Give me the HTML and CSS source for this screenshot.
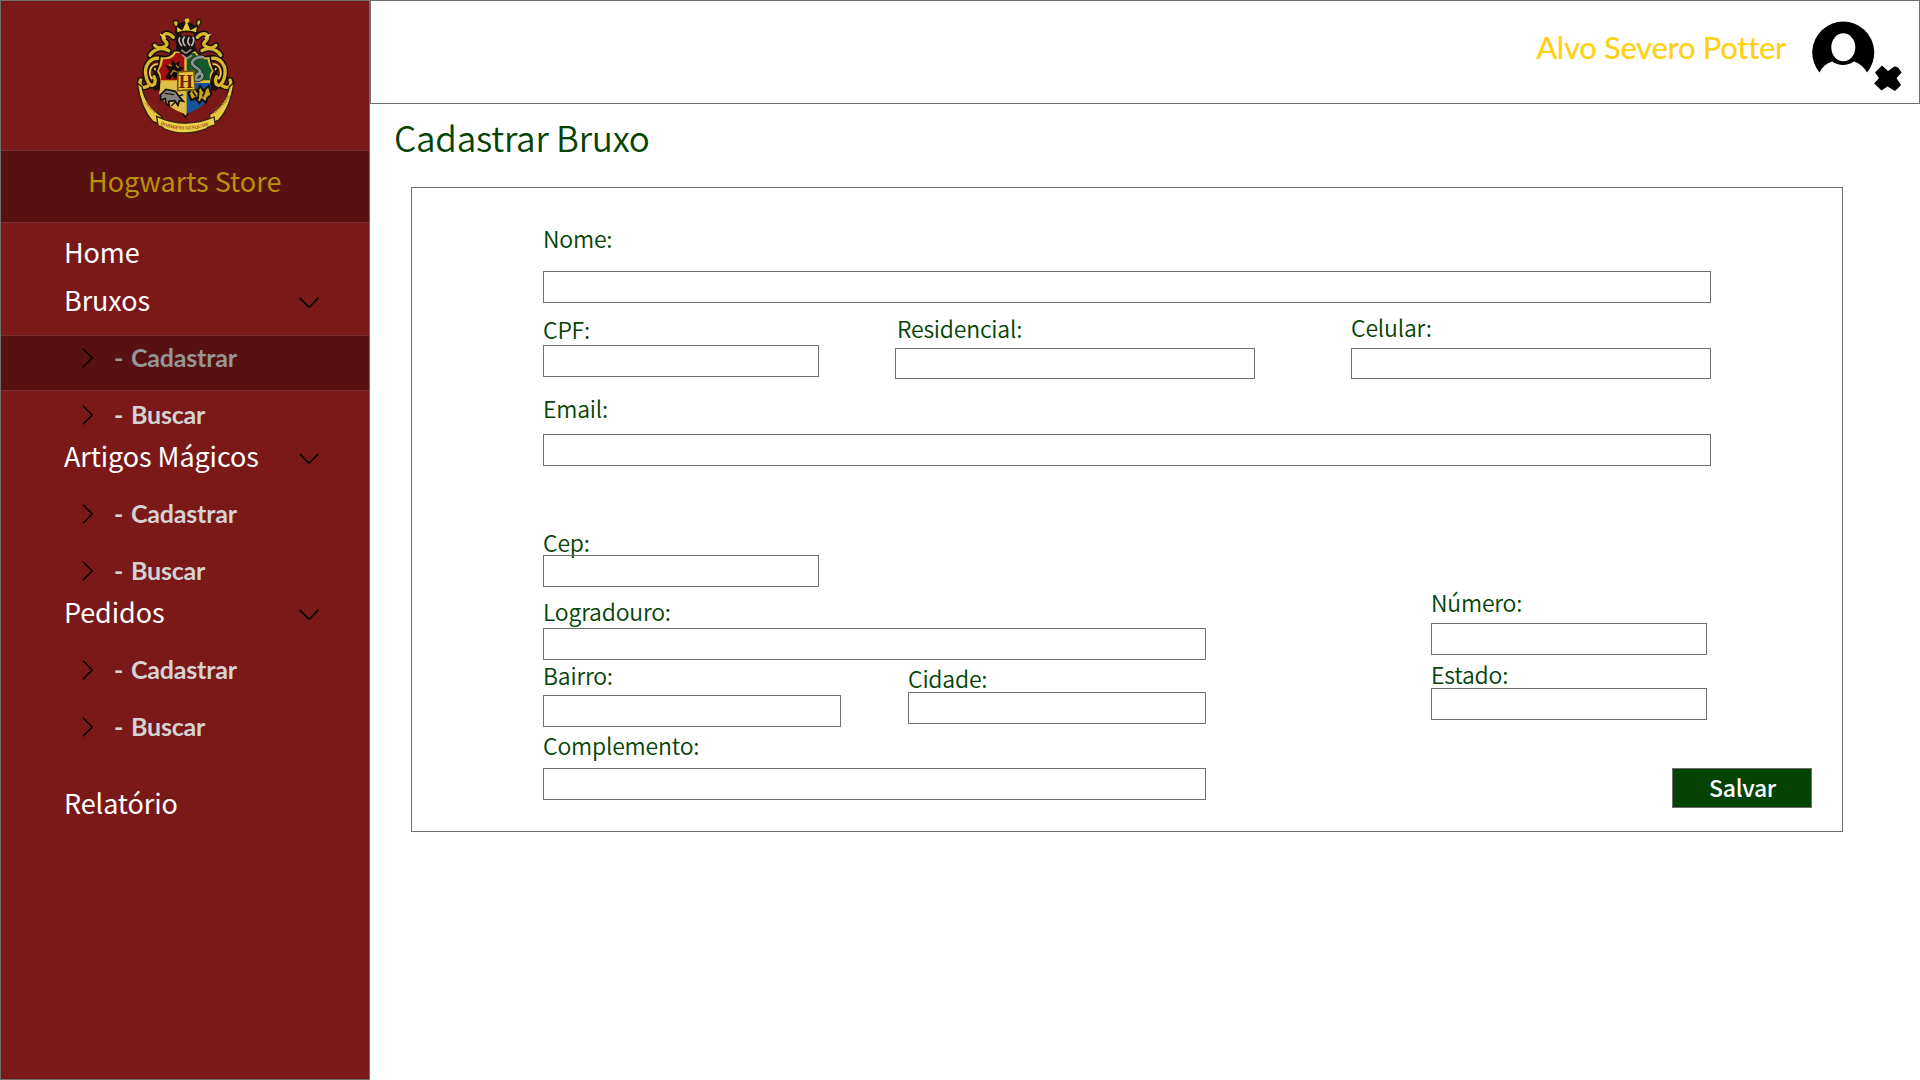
FILE: index.html
```html
<!DOCTYPE html>
<html lang="pt-BR">
<head>
<meta charset="utf-8">
<title>Hogwarts Store - Cadastrar Bruxo</title>
<link rel="stylesheet" href="styles.css">
</head>
<body>
<div class="app">
  <aside class="sidebar">
    <div class="logo">
      <svg class="crest" viewBox="0 0 390 450" aria-hidden="true">
        <!-- mantling -->
        <g fill="none" stroke="#16100a" stroke-width="19" stroke-linecap="round">
          <path d="M160 112c-22-24-42-2-24 12s-20 28-32 12M232 112c22-24 42-2 24 12s20 28 32 12M146 152c-26-16-50 2-56 14M246 152c26-16 50 2 56 14"/>
          <path d="M130 178c-40-14-62 22-50 58s34 16 22-6M262 178c40-14 62 22 50 58s-34 16-22-6M84 258c-22 12-28-6-22-18M308 258c22 12 28-6 22-18"/>
          <path d="M104 206l18 20M288 206l-18 20M108 262l8-16M284 262l-8-16"/>
        </g>
        <g fill="none" stroke="#d9b62c" stroke-width="10" stroke-linecap="round">
          <path d="M160 112c-22-24-42-2-24 12s-20 28-32 12M232 112c22-24 42-2 24 12s20 28 32 12M146 152c-26-16-50 2-56 14M246 152c26-16 50 2 56 14"/>
          <path d="M130 178c-40-14-62 22-50 58s34 16 22-6M262 178c40-14 62 22 50 58s-34 16-22-6M84 258c-22 12-28-6-22-18M308 258c22 12 28-6 22-18"/>
        </g>
        <g fill="none" stroke="#f1d552" stroke-width="5" stroke-linecap="round">
          <path d="M118 192c-30-2-34 30-22 44M274 192c30-2 34 30 22 44M104 206l18 20M288 206l-18 20M122 104l14 10M270 104l-14 10"/>
        </g>
        <!-- shield -->
        <path d="M120 168q28 8 42-16h66q14 24 42 16 4 30 14 46-16 22-10 56-18 42-62 58l-16 24-16-24q-44-16-62-58 6-34-10-56 10-16 12-46z" fill="#e0bd34" stroke="#17100a" stroke-width="5"/>
        <path d="M130 177q26 4 38-18h25v82h-71q4-18-6-28 10-14 14-36z" fill="#a30f10"/>
        <path d="M262 177q-26 4-38-18h-24v82h70q-4-18 6-28-10-14-14-36z" fill="#16592d"/>
        <path d="M121 249h72v92q-56-18-76-62 4-12 4-30z" fill="#dfc04a"/>
        <path d="M200 249h71q0 18 4 30-20 44-75 62z" fill="#16539c"/>
        <path d="M140 232l10-20-10-14 14 4 4-18 8 10 10-8-2 14 14 4-10 8 8 18-14-6-6 12-8-12-8 12z" fill="#130d0b" stroke="#130d0b" stroke-width="4"/>
        <path d="M146 194l10 4M152 224l8-12 10 4M168 196l8 8" stroke="#c49822" stroke-width="4"/>
        <path d="M252 172c-26-4-46 14-30 26s26 14 10 28 6 20 14 6-20-16-18 2" fill="none" stroke="#252d2a" stroke-width="13"/>
        <path d="M252 172c-26-4-46 14-30 26s26 14 10 28 6 20 14 6-20-16-18 2" fill="none" stroke="#899891" stroke-width="8"/>
        <path d="M122 284l16-16 28 6 12 16 12 14-12-2-4 14-10-14-18 2 2 14-10-8-2-14-14 4z" fill="#858580" stroke="#15120f" stroke-width="5"/>
        <path d="M176 288l14-4M168 304l-14 14M134 280l28 4" stroke="#18130e" stroke-width="4"/>
        <path d="M206 280l14-20 12 14 8-16 10 14 16-14 8 26-12 10-4 14-12-10-8 12-10-14-14 4z" fill="#caa428" stroke="#14100a" stroke-width="6"/>
        <path d="M218 274l10 16M236 272l-2 26M256 270l-8 20M220 296l14-4" stroke="#17120c" stroke-width="5"/>
        <path d="M174 216l48-3 3 56-52 3z" fill="#e8c433" stroke="#6f570f" stroke-width="5"/>
        <text x="197.500" y="263" text-anchor="middle" class="crest-letter">H</text>
        <!-- crown and helmet -->
        <path d="M165 94q4-28 28-28 28 0 38 20l-8 24 4 40-28 22-30-22z" fill="#17120f"/>
        <path d="M170 100l-2-24 18 12 14-32 12 32 22-12-4 24q-30-12-60 0z" fill="#edcb35" stroke="#1b150d" stroke-width="5"/>
        <circle cx="201" cy="62" r="7" fill="#e8c42c"/>
        <path d="M163 76q-8-12 5-16 12 6 4 18M238 76q10-10 0-18-13 4-6 18" fill="#dcb426" stroke="#221808" stroke-width="4"/>
        <path d="M180 112q-8 12 6 26M194 110q-12 14 2 28M208 112q-10 14 2 24M218 110q8 12-4 28" fill="none" stroke="#bdb9be" stroke-width="5"/>
        <path d="M184 100q16-6 36 0l2 10q-20-8-38 0z" fill="#881719"/>
        <path d="M184 150l14 10 16-12M186 164l14 12 16-10" fill="none" stroke="#99918d" stroke-width="5"/>
        <!-- motto ribbon -->
        <path d="M52 250l14 10q8 54 60 90l-8 22-20-8q-36-40-46-114zM342 248l-14 12q-10 54-60 84l6 26 22-10q34-34 46-112z" fill="#e8c842" stroke="#2b1b0b" stroke-width="4"/>
        <path d="M110 349q84 40 172 2l4 24q-20 4-28 12-66 24-124 0-8-8-20-10z" fill="#ecd04b" stroke="#38230e" stroke-width="4"/>
        <path id="motto-left" d="M75 309q18 24 38 37" fill="none"/>
        <path id="motto-mid" d="M121 374q74 30 150 0" fill="none"/>
        <path id="motto-right" d="M278 344q37-28 55-62" fill="none"/>
        <text class="motto"><textPath href="#motto-left" textLength="42" lengthAdjust="spacingAndGlyphs">DRACO</textPath></text>
        <text class="motto"><textPath href="#motto-mid" textLength="148" lengthAdjust="spacingAndGlyphs">DORMIENS NUNQUAM</textPath></text>
        <text class="motto"><textPath href="#motto-right" textLength="76" lengthAdjust="spacingAndGlyphs">TITILLANDUS</textPath></text>
      </svg>
    </div>
    <div class="store-name">Hogwarts Store</div>
    <nav class="nav">
      <a class="nav-item">Home</a>
      <div class="group">
        <a class="nav-item">Bruxos <svg class="down" viewBox="0 0 20 12"><path d="M.7.9 10 10.200 19.300.9"/></svg></a>
        <div class="submenu">
          <a class="sub-item active"><svg class="right" viewBox="0 0 12 20"><path d="M.9.7 10.200 10 .9 19.300"/></svg><span>- Cadastrar</span></a>
          <a class="sub-item"><svg class="right" viewBox="0 0 12 20"><path d="M.9.7 10.200 10 .9 19.300"/></svg><span>- Buscar</span></a>
        </div>
      </div>
      <div class="group">
        <a class="nav-item">Artigos Mágicos <svg class="down" viewBox="0 0 20 12"><path d="M.7.9 10 10.200 19.300.9"/></svg></a>
        <div class="submenu">
          <a class="sub-item"><svg class="right" viewBox="0 0 12 20"><path d="M.9.7 10.200 10 .9 19.300"/></svg><span>- Cadastrar</span></a>
          <a class="sub-item"><svg class="right" viewBox="0 0 12 20"><path d="M.9.7 10.200 10 .9 19.300"/></svg><span>- Buscar</span></a>
        </div>
      </div>
      <div class="group">
        <a class="nav-item">Pedidos <svg class="down" viewBox="0 0 20 12"><path d="M.7.9 10 10.200 19.300.9"/></svg></a>
        <div class="submenu">
          <a class="sub-item"><svg class="right" viewBox="0 0 12 20"><path d="M.9.7 10.200 10 .9 19.300"/></svg><span>- Cadastrar</span></a>
          <a class="sub-item"><svg class="right" viewBox="0 0 12 20"><path d="M.9.7 10.200 10 .9 19.300"/></svg><span>- Buscar</span></a>
        </div>
      </div>
      <a class="nav-item report">Relatório</a>
    </nav>
  </aside>
  <div class="content">
    <header class="topbar">
      <span class="user-name">Alvo Severo Potter</span>
      <svg class="user-icons" viewBox="0 0 92 74" aria-hidden="true">
        <path d="M7.500 51.500A31 31 0 1 1 55 51.500Q50.500 43.500 42 40.600Q37 44 31 44T20 40.600Q11.500 43.500 7.500 51.500z"/>
        <ellipse class="face" cx="31.300" cy="26.300" rx="12" ry="14"/>
        <path d="M70 44.500 76 50 82.500 45.500Q86 44.500 89.500 51.500L84.500 57.300 89 64 83 70 75.500 65.500 69.500 69.500 62.200 62.500 67 57 63 51.500z"/>
      </svg>
    </header>
    <main class="page">
      <h1 class="title">Cadastrar Bruxo</h1>
      <form class="panel">
        <div class="field nome"><label for="nome">Nome:</label><input id="nome"></div>
        <div class="row contact">
          <div class="field cpf"><label for="cpf">CPF:</label><input id="cpf"></div>
          <div class="field residencial"><label for="residencial">Residencial:</label><input id="residencial"></div>
          <div class="field celular"><label for="celular">Celular:</label><input id="celular"></div>
        </div>
        <div class="field email"><label for="email">Email:</label><input id="email"></div>
        <div class="field cep"><label for="cep">Cep:</label><input id="cep"></div>
        <div class="row address">
          <div class="street">
            <div class="field logradouro"><label for="logradouro">Logradouro:</label><input id="logradouro"></div>
            <div class="row district">
              <div class="field bairro"><label for="bairro">Bairro:</label><input id="bairro"></div>
              <div class="field cidade"><label for="cidade">Cidade:</label><input id="cidade"></div>
            </div>
            <div class="field complemento"><label for="complemento">Complemento:</label><input id="complemento"></div>
          </div>
          <div class="side">
            <div class="field numero"><label for="numero">Número:</label><input id="numero"></div>
            <div class="field estado"><label for="estado">Estado:</label><input id="estado"></div>
            <button class="save" type="button">Salvar</button>
          </div>
        </div>
      </form>
    </main>
  </div>
</div>
</body>
</html>
```
FILE: styles.css
```css
* { box-sizing: border-box; }
body {
  margin: 0;
  background: #fff;
  font-family: "Noto Sans CJK SC", "Noto Sans", sans-serif;
}
.app { display: flex; width: 1920px; height: 1080px; }

.sidebar {
  width: 370px;
  height: 1080px;
  background: #7b1818;
  border: 1px solid #707070;
}
.logo { display: flex; height: 149px; padding-left: 119px; }
.crest { width: 130px; height: 150px; margin-top: -1px; }
.crest-letter { font: bold 54px "Liberation Serif", serif; fill: #65200e; }
.motto { font: bold 15px "Liberation Serif", serif; fill: #9c4a18; }
.store-name {
  height: 73px;
  background: #571111;
  border: solid #743030;
  border-width: 1px 0;
  color: #b8900b;
  font-size: 27px;
  line-height: 40px;
  padding: 10px 0 0 87px;
}
.nav { padding-top: 8px; }
.nav-item {
  display: flex;
  justify-content: space-between;
  height: 40px;
  padding: 0 50px 0 63px;
  color: #fff;
  font-size: 27px;
  line-height: 42px;
  letter-spacing: -0.1px;
}
.group { margin-top: 8px; height: 148px; }
.down { width: 20px; height: 12px; margin-top: 18px; }
.right { width: 12px; height: 20px; margin-top: 12px; }
.down path, .right path { fill: none; stroke: #000; stroke-width: 1.5; }
.submenu { padding-top: 16px; }
.sub-item {
  display: flex;
  gap: 20px;
  height: 56px;
  margin-bottom: 1px;
  padding-left: 81px;
  border: solid transparent;
  border-width: 1px 0;
  color: #d3d3d3;
  font: bold 25px/40px Lato, sans-serif;
  letter-spacing: -0.2px;
  word-spacing: 2px;
}
.sub-item span { padding-top: 1px; }
.sub-item.active { background: #571111; border-color: #743030; color: #969696; }
.report { margin-top: 43px; }

.content { flex: 1; }
.topbar {
  display: flex;
  justify-content: flex-end;
  height: 104px;
  padding-right: 15px;
  border: 1px solid #707070;
}
.user-name {
  margin: 26px 26px 0 0;
  color: #ffd014;
  font: 500 31px/40px Lato, sans-serif;
  letter-spacing: -0.35px;
}
.user-icons { width: 92px; height: 74px; margin-top: 20px; }
.face { fill: #fff; }

.title {
  margin: 8px 0 0 24px;
  color: #044304;
  font-size: 35px;
  font-weight: 350;
  line-height: 50px;
  letter-spacing: -0.2px;
}
.panel {
  width: 1432px;
  height: 645px;
  margin: 25px 0 0 41px;
  padding: 36px 30px 0 131px;
  border: 1px solid #707070;
}
.row { display: flex; align-items: flex-start; }
.field { display: flex; flex-direction: column; align-items: flex-start; }
.field label {
  height: 26px;
  color: #044304;
  font-size: 23px;
  font-weight: 350;
  line-height: 28px;
  letter-spacing: -0.2px;
  white-space: nowrap;
}
.field input {
  display: block;
  width: 276px;
  height: 32px;
  padding: 0 8px;
  border: 1px solid #707070;
  background: transparent;
  font: inherit;
}
.nome, .email { width: 1168px; }
.nome input, .email input { width: 100%; margin-top: 21px; }
.contact { height: 64px; margin-top: 10px; }
.cpf { padding-top: 2px; }
.cpf input { margin-top: 4px; }
.residencial { margin-left: 76px; padding-top: 1px; }
.residencial label { padding-left: 2px; }
.residencial input { width: 360px; height: 31px; margin-top: 8px; }
.celular { margin-left: 96px; }
.celular input { width: 360px; height: 31px; margin-top: 9px; }
.email { margin-top: 17px; }
.email input { margin-top: 14px; }
.cep { margin-top: 62px; }
.cep input { margin-top: 1px; }
.address { justify-content: space-between; }
.street { width: 663px; padding-top: 10px; }
.logradouro input { width: 100%; margin-top: 5px; }
.district { justify-content: space-between; height: 67px; padding-top: 1px; }
.district input { width: 298px; }
.bairro input { margin-top: 8px; }
.cidade { padding-top: 3px; }
.cidade input { margin-top: 2px; }
.complemento { padding-top: 4px; }
.complemento input { width: 100%; margin-top: 11px; }
.side { display: flex; flex-direction: column; width: 381px; padding-top: 1px; }
.numero input { margin-top: 9px; }
.estado { margin-top: 5px; }
.estado input { margin-top: 2px; }
.save {
  align-self: flex-end;
  width: 140px;
  height: 40px;
  margin-top: 48px;
  padding: 0 0 2px 1px;
  border: 1px solid #707070;
  background: #044304;
  color: #fff;
  font: 500 23px/36px "Noto Sans CJK SC", "Noto Sans", sans-serif;
  letter-spacing: -0.3px;
}
```
